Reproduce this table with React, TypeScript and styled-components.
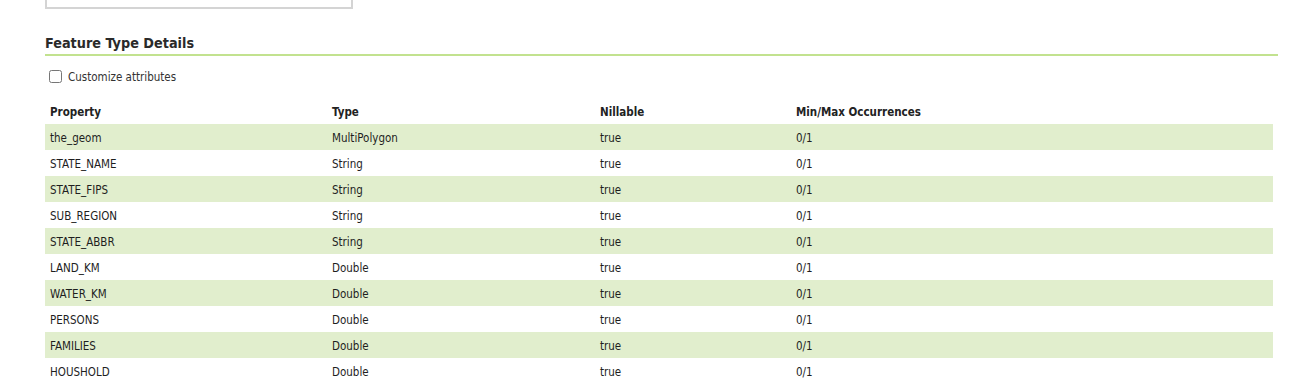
import React, { useState } from 'react';
import styled, { createGlobalStyle } from 'styled-components';

const GlobalStyle = createGlobalStyle`
  body {
    margin: 0;
    background: #fff;
    font-family: "DejaVu Sans Condensed", "DejaVu Sans", Tahoma, sans-serif;
    font-size: 11.5px;
    color: #333;
  }
`;

const Page = styled.div`
  padding: 0 12px 0 45px;
`;

const NameInput = styled.input`
  display: block;
  box-sizing: border-box;
  width: 308px;
  height: 30px;
  margin-top: -21px;
  border: 2px solid #d4d4d4;
  background: #fff;
`;

const Heading = styled.h3`
  margin: 26px 0 0;
  padding-bottom: 3px;
  font-size: 14.3px;
  font-weight: bold;
  color: #2a2a2a;
  border-bottom: 2px solid #c2e28f;
`;

const CheckRow = styled.label`
  display: flex;
  align-items: center;
  gap: 6px;
  margin: 13px 0 0 4px;
  height: 15px;

  input {
    margin: 0;
    width: 13px;
    height: 13px;
  }
`;

const Table = styled.table`
  width: 1228px;
  margin-top: 16px;
  border-collapse: collapse;
`;

const HeadCell = styled.th<{ $w?: number }>`
  height: 24px;
  padding: 0 5px;
  text-align: left;
  font-weight: bold;
  color: #222;
  width: ${(p) => (p.$w ? `${p.$w}px` : 'auto')};
`;

const Row = styled.tr<{ $odd: boolean }>`
  height: 26px;
  background: ${(p) => (p.$odd ? '#e1eecd' : '#fff')};
`;

const Cell = styled.td`
  padding: 2px 5px 0;
  color: #1e1e1e;
`;

const attributes = [
  ['the_geom', 'MultiPolygon'],
  ['STATE_NAME', 'String'],
  ['STATE_FIPS', 'String'],
  ['SUB_REGION', 'String'],
  ['STATE_ABBR', 'String'],
  ['LAND_KM', 'Double'],
  ['WATER_KM', 'Double'],
  ['PERSONS', 'Double'],
  ['FAMILIES', 'Double'],
  ['HOUSHOLD', 'Double'],
];

const App = () => {
  const [customize, setCustomize] = useState(false);

  return (
    <Page>
      <GlobalStyle />
      <NameInput type="text" />
      <Heading>Feature Type Details</Heading>
      <CheckRow>
        <input
          type="checkbox"
          checked={customize}
          onChange={(e) => setCustomize(e.target.checked)}
        />
        Customize attributes
      </CheckRow>
      <Table>
        <thead>
          <tr>
            <HeadCell $w={272}>Property</HeadCell>
            <HeadCell $w={258}>Type</HeadCell>
            <HeadCell $w={186}>Nillable</HeadCell>
            <HeadCell>Min/Max Occurrences</HeadCell>
          </tr>
        </thead>
        <tbody>
          {attributes.map(([name, type], i) => (
            <Row key={name} $odd={i % 2 === 0}>
              <Cell>{name}</Cell>
              <Cell>{type}</Cell>
              <Cell>true</Cell>
              <Cell>0/1</Cell>
            </Row>
          ))}
        </tbody>
      </Table>
    </Page>
  );
};

export default App;
